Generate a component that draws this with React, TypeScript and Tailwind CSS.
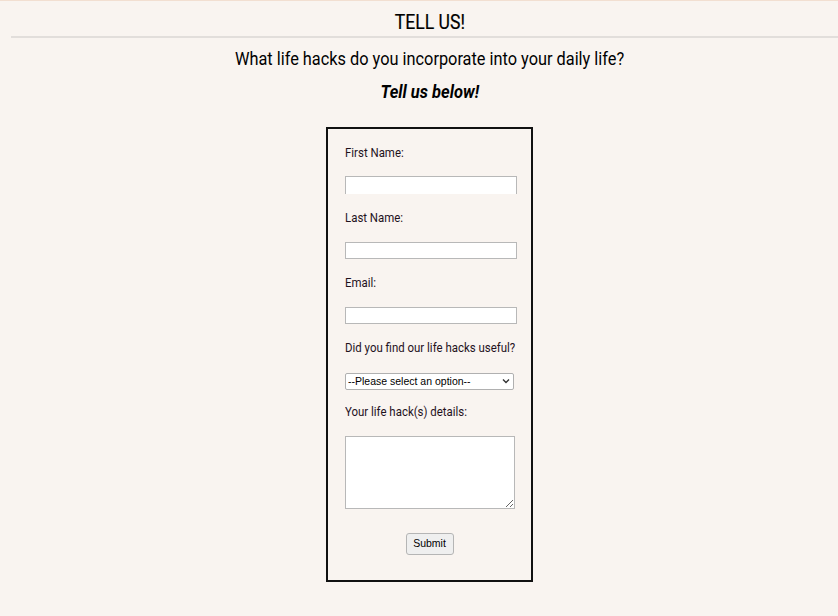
import React from "react";

export default function App() {
  const label =
    "block h-[16px] w-fit origin-left scale-x-[0.88] whitespace-nowrap leading-[16px] text-[13px] text-[#1f121d]";
  return (
    <div className="min-h-[616px] w-full overflow-hidden bg-[#f9f4f0] font-['Roboto',sans-serif] text-black">
      <div className="h-px bg-[#f2dfd1]" />
      <div className="ml-[11px] w-[838px]">
        <h1 className="mt-[9px] flex h-[24px] justify-center text-[20px] leading-[24px] font-normal text-black">
          <span className="inline-block scale-x-[0.88] [-webkit-text-stroke:0.2px_black]">TELL US!</span>
        </h1>
        <div className="mt-[2px] h-[2px] bg-[#e2dedb]" />
        <p className="mt-[10px] flex h-[22px] justify-center text-[18px] leading-[22px] text-black">
          <span className="inline-block whitespace-nowrap scale-x-[0.907]">
            What life hacks do you incorporate into your daily life?
          </span>
        </p>
        <p className="mt-[11px] flex h-[22px] justify-center text-[18px] leading-[22px] font-bold italic">
          <span className="inline-block whitespace-nowrap scale-x-[0.915]">Tell us below!</span>
        </p>
        <form
          className="ml-[315px] mt-[24px] w-[207px] border-2 border-[#111] pt-[16px] pb-[25px] pl-[17px]"
          onSubmit={(e) => e.preventDefault()}
        >
          <label className={label}>First Name:</label>
          <input
            type="text"
            className="mt-[15px] block h-[18px] w-[172px] border border-b-0 border-[#b8b8b8] bg-white"
          />
          <label className={label + " mt-[16px]"}>Last Name:</label>
          <input
            type="text"
            className="mt-[16px] block h-[17px] w-[172px] border border-[#b8b8b8] bg-white"
          />
          <label className={label + " mt-[16px]"}>Email:</label>
          <input
            type="email"
            className="mt-[16px] block h-[17px] w-[172px] border border-[#b8b8b8] bg-white"
          />
          <label className={label + " mt-[16px]"}>Did you find our life hacks useful?</label>
          <div className="relative mt-[17px] h-[17px] w-[169px]">
            <select
              className="block h-[17px] w-[169px] appearance-none rounded-[2px] border border-[#b0b0b0] bg-white pl-[2px] font-['Liberation_Sans',sans-serif] text-[10.5px] leading-[13px] text-black"
              defaultValue=""
            >
              <option value="">--Please select an option--</option>
              <option value="yes">Yes</option>
              <option value="no">No</option>
            </select>
            <svg
              className="pointer-events-none absolute right-[4px] top-[5px]"
              width="8"
              height="6"
              viewBox="0 0 8 6"
            >
              <path d="M1 1.5 L4 4.5 L7 1.5" fill="none" stroke="#333" strokeWidth="1.4" />
            </svg>
          </div>
          <label className={label + " mt-[14px]"}>Your life hack(s) details:</label>
          <textarea className="mt-[16px] block h-[73px] w-[170px] border border-[#b8b8b8] bg-white" />
          <div className="mt-[24px] flex w-[169px] justify-center">
            <button
              type="submit"
              className="h-[22px] w-[48px] rounded-[3px] border border-[#b5b5b5] bg-[#efefef] font-['Liberation_Sans',sans-serif] text-[10.5px] text-black"
            >
              Submit
            </button>
          </div>
        </form>
      </div>
    </div>
  );
}
